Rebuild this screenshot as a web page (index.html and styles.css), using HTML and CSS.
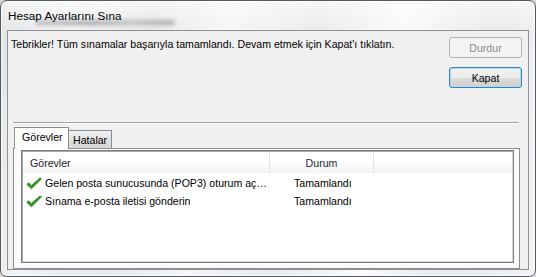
FILE: index.html
```html
<!DOCTYPE html>
<html lang="tr">
<head>
<meta charset="utf-8">
<title>Hesap Ayarlarını Sına</title>
<link rel="stylesheet" href="styles.css">
</head>
<body>
<div class="window">
  <div class="titlebar">
    <span class="title">Hesap Ayarlarını Sına</span>
    <span class="ghost"></span>
  </div>
  <div class="client">
    <div class="top">
      <p class="msg">Tebrikler! Tüm sınamalar başarıyla tamamlandı. Devam etmek için Kapat'ı tıklatın.</p>
      <div class="buttons">
        <button class="btn" disabled>Durdur</button>
        <button class="btn default">Kapat</button>
      </div>
    </div>
    <div class="sep"></div>
    <div class="tabs">
      <div class="tab active">Görevler</div>
      <div class="tab">Hatalar</div>
    </div>
    <div class="panel">
      <div class="list">
        <div class="row header">
          <div class="c1">Görevler</div>
          <div class="c2">Durum</div>
          <div class="c3"></div>
        </div>
        <div class="row item">
          <div class="c1"><svg class="check" width="16" height="13" viewBox="0 0 16 13"><path d="M0.8 7.4 L2.6 5.8 L5.4 8.4 L14.2 0.8 L15.4 2.0 L5.5 11.8 Z" fill="#2e9a1b" stroke="#176b0c" stroke-width="0.6" stroke-linejoin="round"/></svg><span>Gelen posta sunucusunda (POP3) oturum aç…</span></div>
          <div class="c2">Tamamlandı</div>
          <div class="c3"></div>
        </div>
        <div class="row item">
          <div class="c1"><svg class="check" width="16" height="13" viewBox="0 0 16 13"><path d="M0.8 7.4 L2.6 5.8 L5.4 8.4 L14.2 0.8 L15.4 2.0 L5.5 11.8 Z" fill="#2e9a1b" stroke="#176b0c" stroke-width="0.6" stroke-linejoin="round"/></svg><span>Sınama e-posta iletisi gönderin</span></div>
          <div class="c2">Tamamlandı</div>
          <div class="c3"></div>
        </div>
      </div>
    </div>
  </div>
</div>
</body>
</html>
```

FILE: styles.css
```css
* { box-sizing: border-box; }
html, body { margin: 0; padding: 0; }
body {
  width: 536px;
  height: 277px;
  overflow: hidden;
  background: #d8d8d8;
  font-family: "Liberation Sans", Arial, sans-serif;
  font-size: 10.6px;
  color: #000;
}
.window {
  position: relative;
  width: 536px;
  height: 277px;
  border: 1px solid #555a5e;
  border-radius: 7px;
  padding: 0 6px 0 6px;
  background:
    linear-gradient(180deg, rgba(255,255,255,0.55) 0%, rgba(255,255,255,0) 30px),
    linear-gradient(100deg, #e2e4e6 0%, #f2f3f4 12%, #e7e8ea 26%, #f6f6f7 40%, #eaebec 55%, #fafafa 70%, #e9eaeb 85%, #f4f4f5 100%);
  box-shadow: inset 0 0 0 1px rgba(255,255,255,0.7);
}
.titlebar {
  position: relative;
  height: 29px;
  padding: 8px 0 0 1px;
}
.title {
  position: relative;
  z-index: 1;
  font-size: 11.7px;
  color: #000;
  text-shadow: 0 0 6px rgba(255,255,255,0.9);
}
.ghost {
  position: absolute;
  left: 28px;
  top: 19px;
  width: 140px;
  height: 5px;
  border-radius: 3px;
  background: linear-gradient(90deg, rgba(90,90,90,0.35), rgba(90,90,90,0.5) 40%, rgba(90,90,90,0.3) 70%, rgba(90,90,90,0.45));
  filter: blur(2px);
}
.client {
  width: 522px;
  height: 240px;
  background: #f0f0f0;
  border: 1px solid #8d9094;
  display: flex;
  flex-direction: column;
}
.top {
  display: flex;
  justify-content: space-between;
  padding: 6px 6px 0 3px;
}
.msg {
  margin: 0;
  line-height: 15px;
}
.buttons {
  display: flex;
  flex-direction: column;
  gap: 9px;
}
.btn {
  width: 73px;
  height: 21px;
  padding: 0;
  font: inherit;
  color: #000;
  border: 1px solid #707070;
  border-radius: 3px;
  background: linear-gradient(180deg, #f2f2f2 0%, #ebebeb 50%, #dddddd 51%, #cfcfcf 100%);
  box-shadow: inset 0 0 0 1px rgba(255,255,255,0.75);
}
.btn:disabled {
  color: #8b8b8b;
  border-color: #adb2b5;
  background: #f4f4f4;
  box-shadow: none;
}
.btn.default {
  border-color: #3c7fb1;
  box-shadow: inset 0 0 0 1px #a8dcf5;
}
.sep {
  height: 2px;
  margin: 34px 9px 0 5px;
  border-top: 1px solid #a0a0a0;
  border-bottom: 1px solid #ffffff;
}
.tabs {
  display: flex;
  align-items: flex-end;
  margin: 3px 0 0 6px;
  height: 21px;
  position: relative;
  z-index: 1;
}
.tab {
  height: 18px;
  padding: 2px 4px 0 4px;
  border: 1px solid #898c95;
  border-bottom: none;
  background: linear-gradient(180deg, #f2f2f2 0%, #e2e2e2 50%, #d6d6d6 100%);
  line-height: 14px;
}
.tab + .tab { border-left: none; }
.tab.active {
  width: 55px;
  height: 22px;
  margin-bottom: -1px;
  padding: 2px 0 0 7px;
  background: #ffffff;
}
.panel {
  width: 507px;
  height: 121px;
  margin-left: 5px;
  border: 1px solid #898c95;
  background: #fcfcfc;
  padding: 1px 0 0 7px;
}
.list {
  width: 493px;
  height: 113px;
  border: 1px solid #7c8085;
  box-shadow: inset 1px 1px 0 #a3a6aa, inset -1px -1px 0 #d4d6d8;
  background: #ffffff;
  padding: 1px;
}
.row {
  display: flex;
  align-items: center;
}
.header {
  height: 21px;
  margin-bottom: 1px;
  background: linear-gradient(180deg, #ffffff 0%, #ffffff 45%, #f1f2f4 100%);
  color: #1e2630;
}
.header .c1 { padding-left: 7px; }
.header .c1, .header .c2 {
  height: 100%;
  display: flex;
  align-items: center;
  border-right: 1px solid #e3e5e8;
}
.header .c2 { justify-content: center; }
.c1 {
  width: 247px;
  display: flex;
  align-items: center;
}
.c2 { width: 104px; }
.c3 { flex: 1; }
.item {
  height: 18px;
}
.item .c1 { padding-left: 3px; }
.item .c2 { padding-left: 24px; }
.check {
  flex: none;
  margin-right: 3px;
}
```
